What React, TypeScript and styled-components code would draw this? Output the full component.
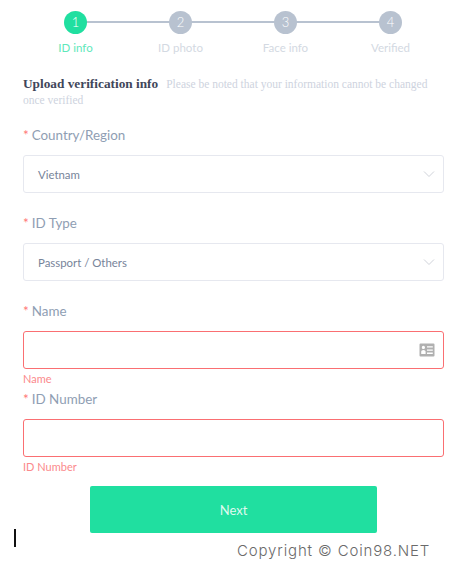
import styled, { createGlobalStyle } from "styled-components";

const GlobalStyle = createGlobalStyle`
  html, body {
    margin: 0;
    padding: 0;
    background: #fff;
    font-family: "Lato", "Liberation Sans", sans-serif;
  }
  * { box-sizing: border-box; }
`;

const Page = styled.div`
  width: 461px;
  height: 566px;
  overflow: hidden;
  display: flex;
  flex-direction: column;
`;

const Stepper = styled.div`
  display: grid;
  grid-template-columns: repeat(4, 105px);
  padding: 11px 0 0 23px;
`;

const Step = styled.div`
  display: flex;
  flex-direction: column;
  align-items: center;
  position: relative;
  &:not(:last-child)::after {
    content: "";
    position: absolute;
    top: 10px;
    left: 52px;
    width: 105px;
    height: 2px;
    background: #b8c2d0;
  }
`;

const Circle = styled.div<{ $active?: boolean }>`
  width: 23px;
  height: 23px;
  border-radius: 50%;
  background: ${(p) => (p.$active ? "#20dfa0" : "#b8c2d0")};
  color: #fff;
  font-size: 13px;
  font-weight: 300;
  line-height: 23px;
  text-align: center;
  position: relative;
  z-index: 1;
`;

const StepLabel = styled.div<{ $active?: boolean }>`
  margin-top: 7px;
  font-size: 11.5px;
  line-height: 14px;
  color: ${(p) => (p.$active ? "#5fe8bb" : "#d3d9e2")};
`;

const Form = styled.div`
  padding: 0 17px 0 23px;
  display: flex;
  flex-direction: column;
`;

const Intro = styled.div`
  margin-top: 21px;
  display: flex;
  flex-wrap: wrap;
  align-items: baseline;
  column-gap: 8px;
  font-family: "Liberation Serif", serif;
  font-size: 11.5px;
  line-height: 16px;
  color: #ced3de;
`;

const IntroTitle = styled.strong`
  font-size: 13.3px;
  color: #41465a;
`;

const IntroRest = styled.span`
  flex-basis: 100%;
`;

const FieldLabel = styled.div<{ $top: number }>`
  margin-top: ${(p) => p.$top}px;
  font-size: 13.4px;
  line-height: 18px;
  color: #8f9eb3;
`;

const Star = styled.span`
  color: #f77;
  margin-right: 3px;
`;

const Box = styled.div<{ $error?: boolean }>`
  margin-top: 11px;
  height: 38px;
  border: 1px solid ${(p) => (p.$error ? "#fa6f72" : "#e6e8ef")};
  border-radius: 3px;
  display: flex;
  align-items: center;
  justify-content: space-between;
  padding: 0 8px 0 14px;
  font-size: 11.4px;
  color: #77849a;
`;

const ErrorText = styled.div`
  margin-top: 3px;
  font-size: 11px;
  line-height: 14px;
  color: #fb8a8c;
`;

const NextButton = styled.button`
  align-self: flex-start;
  margin: 12px 0 0 67px;
  width: 287px;
  height: 47px;
  border: none;
  border-radius: 2px;
  background: #20dfa0;
  color: #dff9ef;
  font-family: "Lato", "Liberation Sans", sans-serif;
  font-size: 13px;
`;

const Footer = styled.div`
  display: flex;
  align-items: flex-start;
  padding-left: 14px;
`;

const Caret = styled.div`
  width: 2px;
  height: 18px;
  margin-top: -4px;
  background: #111;
`;

const Copyright = styled.div`
  margin: 9px 0 0 221px;
  font-family: "Inter", "Liberation Sans", sans-serif;
  font-size: 15px;
  font-weight: 300;
  line-height: 18px;
  letter-spacing: 0.85px;
  white-space: nowrap;
  color: #6a6a6a;
`;

const Chevron = () => (
  <svg width="12" height="8" viewBox="0 0 12 8" fill="none" stroke="#d0d3da" strokeWidth="1">
    <path d="M1 1.5l5 5 5-5" />
  </svg>
);

const IdCard = () => (
  <svg width="16" height="14" viewBox="0 0 16 14">
    <path
      fillRule="evenodd"
      fill="#b0b0b0"
      d="M1.5 0.5h13a1 1 0 0 1 1 1v11a1 1 0 0 1-1 1h-13a1 1 0 0 1-1-1v-11a1 1 0 0 1 1-1zM8 3.2v1.3h5.8V3.2zM8 6.4v1.3h5.8V6.4zM8 9.6v1.3h5.8V9.6zM4.4 2.8a1.6 1.6 0 1 0 0 3.2a1.6 1.6 0 1 0 0-3.2zM2.2 10.9h4.4V8.6q0-1.6-2.2-1.6t-2.2 1.6z"
    />
  </svg>
);

const steps = ["ID info", "ID photo", "Face info", "Verified"];

export default function App() {
  return (
    <Page>
      <GlobalStyle />
      <Stepper>
        {steps.map((label, i) => (
          <Step key={label}>
            <Circle $active={i === 0}>{i + 1}</Circle>
            <StepLabel $active={i === 0}>{label}</StepLabel>
          </Step>
        ))}
      </Stepper>
      <Form>
        <Intro>
          <IntroTitle>Upload verification info</IntroTitle>
          <span>Please be noted that your information cannot be changed</span>
          <IntroRest>once verified</IntroRest>
        </Intro>
        <FieldLabel $top={18}>
          <Star>*</Star>Country/Region
        </FieldLabel>
        <Box>
          Vietnam
          <Chevron />
        </Box>
        <FieldLabel $top={21}>
          <Star>*</Star>ID Type
        </FieldLabel>
        <Box>
          Passport / Others
          <Chevron />
        </Box>
        <FieldLabel $top={21}>
          <Star>*</Star>Name
        </FieldLabel>
        <Box $error>
          <span />
          <IdCard />
        </Box>
        <ErrorText>Name</ErrorText>
        <FieldLabel $top={4}>
          <Star>*</Star>ID Number
        </FieldLabel>
        <Box $error />
        <ErrorText>ID Number</ErrorText>
        <NextButton>Next</NextButton>
      </Form>
      <Footer>
        <Caret />
        <Copyright>Copyright © Coin98.NET</Copyright>
      </Footer>
    </Page>
  );
}
